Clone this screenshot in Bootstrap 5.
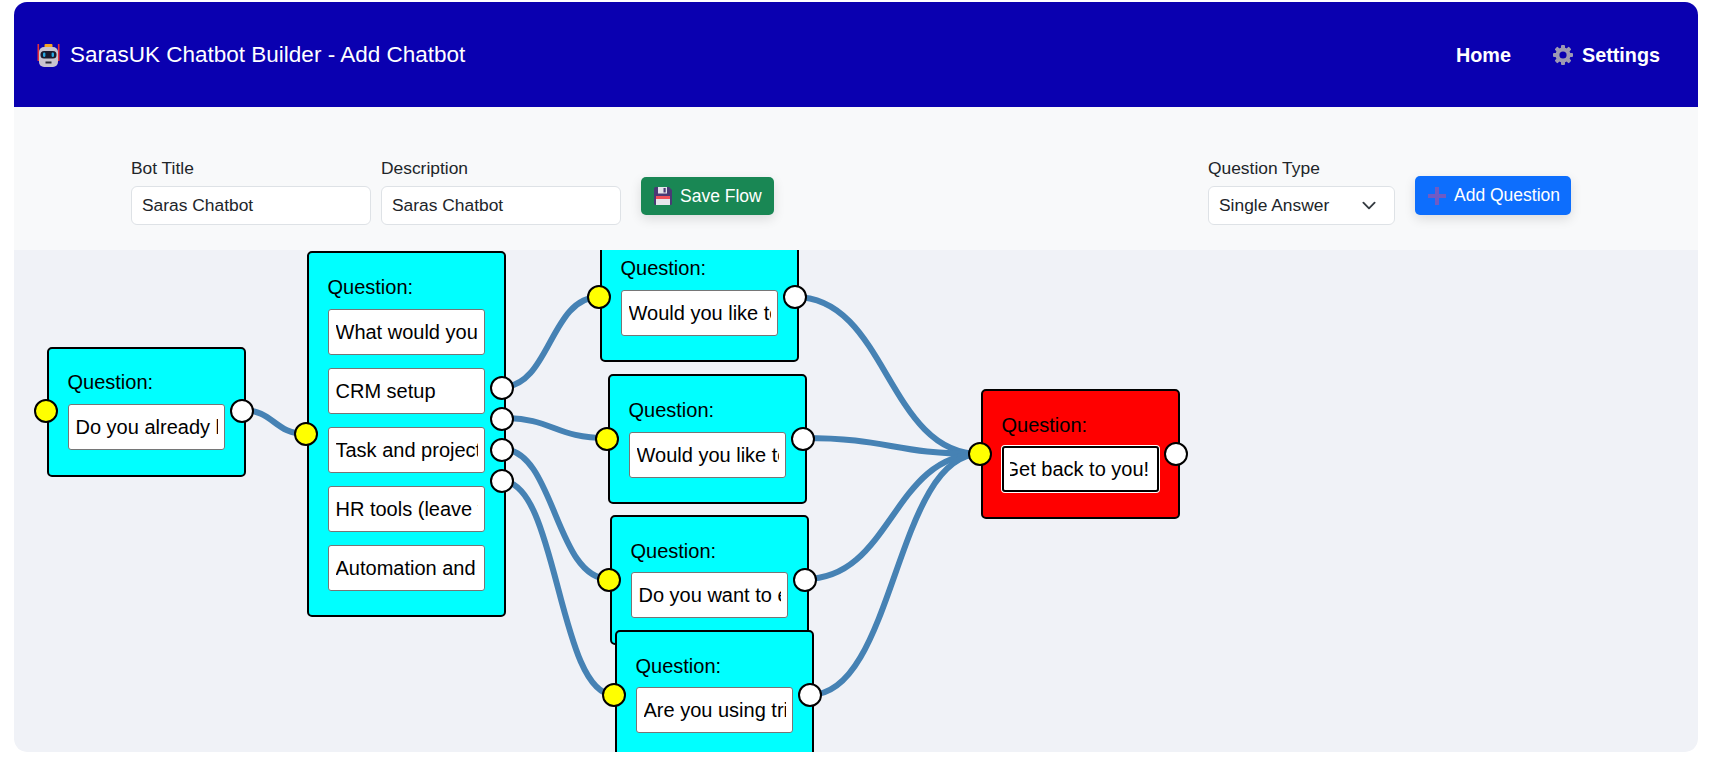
<!DOCTYPE html>
<html lang="en">
<head>
<meta charset="utf-8">
<title>SarasUK Chatbot Builder - Add Chatbot</title>
<link rel="stylesheet" href="https://cdn.jsdelivr.net/npm/bootstrap@5.3.0/dist/css/bootstrap.min.css">
<style>
html,body{height:100%;overflow:hidden}
body{background:#fff;font-family:"Liberation Sans",Arial,sans-serif;color:#212529}
.shell{margin:2px 13px 0 14px;border-radius:13px;overflow:hidden}
.topbar{background:#0a00b0;height:105px;padding:0 38px 0 23px}
.brandline{color:#fff;font-size:22.5px;gap:10px;text-decoration:none}
.menu-row{gap:42px}
.menu-item{color:#fff;font-size:19.8px;font-weight:700;text-decoration:none;gap:9px;line-height:24px}
.toolrow{background:#f8f9fa;height:143px;padding:48px 127px 25px 117px;position:relative;z-index:5}
.left-tools{gap:10px}
.right-tools{gap:20px}
.field-title{font-size:17.4px;line-height:26px;margin-bottom:5px;display:block;color:#212529}
.field-wide{width:240px}
.field-type{width:187px}
.toolrow .form-control,.toolrow .form-select{height:39px;font-size:17.4px;padding:0 10px;line-height:37px;border-radius:6px;border-color:#dee2e6;color:#212529}
.toolrow .form-select{background-position:right 15px center;background-size:20px 15px}
.action{height:38px;margin-bottom:10px;font-size:17.5px;padding:0 13px;border-radius:5px;display:flex;align-items:center;gap:8px;box-shadow:0 4px 12px rgba(0,0,0,.12);border:0;white-space:nowrap}
.action svg{flex:none}
.action-save{width:133px;margin-left:10px;background:#198754;color:#fff}
.action-add{width:156px;height:39px;background:#0d6efd;color:#fff;gap:8px}
.canvas{background:#f0f2f7;height:502px;position:relative;overflow:hidden;border-radius:0 0 13px 13px}
.wires{position:absolute;left:0;top:0;width:1684px;height:502px}
.wires path{fill:none;stroke:#4682b4;stroke-width:6}
.fnode{position:absolute;width:199px;border:2px solid #000;border-radius:5px;background:#0ff;padding:22px 19px 26px 18.5px;color:#000}
.fnode.endnode{background:#f00}
.fnode .qtext{font-size:20px;line-height:24px;margin-bottom:10px;display:block}
.fnode input{display:block;width:157px;height:46px;font-family:"Liberation Sans",Arial,sans-serif;font-size:20px;color:#000;background:#fff;border:1px solid #767676;border-radius:3px;padding:0 6px 0 7px;margin:0;outline:0}
.fnode input+input{margin-top:13px}
.fnode input.focused{border:2px solid #000;box-shadow:0 0 0 1px #fff;text-indent:-6px;padding:0 6px 0 6px}
.ports{position:absolute;top:-2px;bottom:-2px;display:flex;flex-direction:column;justify-content:center;gap:7px}
.ports-in{left:-15px}
.ports-out{right:-10px}
.port{width:24px;height:24px;border:2px solid #000;border-radius:50%;flex:none}
.port-in{background:#ff0}
.port-out{background:#fff}
.lift{margin-top:-3px}
.n1{left:33px;top:97px;height:130px;padding-top:21px}
.n2{left:293px;top:1px;height:366px}
.n3{left:586px;top:-18px;height:130px}
.n4{left:594px;top:124px;height:130px}
.n5{left:596px;top:265px;height:130px}
.n6{left:601px;top:380px;height:130px}
.n7{left:967px;top:139px;height:130px}
.n5 .qtext,.n6 .qtext,.n7 .qtext{margin-bottom:9px}
</style>
</head>
<body>
<div class="shell">
  <nav class="topbar d-flex align-items-center justify-content-between">
    <a class="brandline d-flex align-items-center" href="#">
      <svg width="23" height="24" viewBox="0 0 23 24" aria-hidden="true">
        <rect x="0.5" y="1" width="1.6" height="17" fill="#e5303a"/>
        <rect x="20.9" y="1" width="1.6" height="17" fill="#e5303a"/>
        <rect x="7.5" y="1" width="8" height="4" rx="1" fill="#f5a623"/>
        <rect x="2" y="4" width="19" height="20" rx="5" fill="#c9c4d0"/>
        <rect x="3.5" y="8" width="16" height="7.5" rx="3.5" fill="#1a1a2e"/>
        <rect x="6" y="9.5" width="2.4" height="4.5" rx="1.2" fill="#29a9e0"/>
        <rect x="14.6" y="9.5" width="2.4" height="4.5" rx="1.2" fill="#29a9e0"/>
        <rect x="8.5" y="18.5" width="6" height="2" fill="#2b2b3a"/>
      </svg>
      <span>SarasUK Chatbot Builder - Add Chatbot</span>
    </a>
    <div class="menu-row d-flex align-items-center">
      <a class="menu-item d-flex align-items-center" href="#">Home</a>
      <a class="menu-item d-flex align-items-center" href="#">
        <svg width="20" height="20" viewBox="0 0 20 20" aria-hidden="true">
          <g fill="#9d99b3">
            <rect x="8" y="0" width="4" height="20" rx="1"/>
            <rect x="8" y="0" width="4" height="20" rx="1" transform="rotate(45 10 10)"/>
            <rect x="8" y="0" width="4" height="20" rx="1" transform="rotate(90 10 10)"/>
            <rect x="8" y="0" width="4" height="20" rx="1" transform="rotate(135 10 10)"/>
            <circle cx="10" cy="10" r="7.6"/>
          </g>
          <circle cx="10" cy="10" r="3.6" fill="#0a00b0"/>
        </svg>
        <span>Settings</span>
      </a>
    </div>
  </nav>

  <div class="toolrow d-flex align-items-end justify-content-between">
    <div class="left-tools d-flex align-items-end">
      <div class="field-wide">
        <label class="field-title" for="botTitle">Bot Title</label>
        <input id="botTitle" class="form-control" value="Saras Chatbot">
      </div>
      <div class="field-wide">
        <label class="field-title" for="botDesc">Description</label>
        <input id="botDesc" class="form-control" value="Saras Chatbot">
      </div>
      <button type="button" class="btn action action-save">
        <svg width="18" height="18" viewBox="0 0 18 18" aria-hidden="true">
          <path d="M0 1.5A1.5 1.5 0 0 1 1.5 0H15l3 3v13.5a1.5 1.5 0 0 1-1.5 1.5h-15A1.5 1.5 0 0 1 0 16.5z" fill="#4a3a75"/>
          <rect x="4" y="0" width="9" height="6.5" fill="#e4e4ea"/>
          <rect x="9.5" y="1" width="2.2" height="4.5" fill="#4a3a75"/>
          <rect x="2" y="9" width="14" height="3" fill="#f0505a"/>
          <rect x="2" y="12" width="14" height="6" fill="#e6e6ec"/>
        </svg>
        <span>Save Flow</span>
      </button>
    </div>
    <div class="right-tools d-flex align-items-end">
      <div class="field-type">
        <label class="field-title" for="qType">Question Type</label>
        <select id="qType" class="form-select"><option>Single Answer</option></select>
      </div>
      <button type="button" class="btn action action-add">
        <svg width="18" height="18" viewBox="0 0 18 18" aria-hidden="true">
          <rect x="7" y="0" width="4" height="18" fill="#6f5bc4"/>
          <rect x="0" y="7" width="18" height="4" fill="#6f5bc4"/>
        </svg>
        <span>Add Question</span>
      </button>
    </div>
  </div>

  <div class="canvas">
    <svg class="wires" viewBox="14 250 1684 502" aria-hidden="true">
      <path d="M242 410 C274 410 274 434 306 434"/>
      <path d="M502 387 C550 387 550 297 599 297"/>
      <path d="M502 418 C554 418 554 438 607 438"/>
      <path d="M502 449 C555 449 555 579 609 579"/>
      <path d="M502 481 C558 481 558 695 614 695"/>
      <path d="M795 297 C887 297 887 454 980 454"/>
      <path d="M803 438 C891 438 891 454 980 454"/>
      <path d="M805 579 C892 579 892 454 980 454"/>
      <path d="M810 695 C895 695 895 454 980 454"/>
    </svg>

    <div class="fnode n1">
      <div class="ports ports-in lift"><div class="port port-in"></div></div>
      <span class="qtext">Question:</span>
      <input value="Do you already have a CRM?">
      <div class="ports ports-out lift"><div class="port port-out"></div></div>
    </div>

    <div class="fnode n2">
      <div class="ports ports-in"><div class="port port-in"></div></div>
      <span class="qtext">Question:</span>
      <input value="What would you like to set up?">
      <input value="CRM setup">
      <input value="Task and project management">
      <input value="HR tools (leave tracking)">
      <input value="Automation and workflows">
      <div class="ports ports-out">
        <div class="port port-out"></div>
        <div class="port port-out"></div>
        <div class="port port-out"></div>
        <div class="port port-out"></div>
      </div>
    </div>

    <div class="fnode n3">
      <div class="ports ports-in"><div class="port port-in"></div></div>
      <span class="qtext">Question:</span>
      <input value="Would you like to track leads?">
      <div class="ports ports-out"><div class="port port-out"></div></div>
    </div>

    <div class="fnode n4">
      <div class="ports ports-in"><div class="port port-in"></div></div>
      <span class="qtext">Question:</span>
      <input value="Would you like to assign tasks?">
      <div class="ports ports-out"><div class="port port-out"></div></div>
    </div>

    <div class="fnode n5">
      <div class="ports ports-in"><div class="port port-in"></div></div>
      <span class="qtext">Question:</span>
      <input value="Do you want to enable leave?">
      <div class="ports ports-out"><div class="port port-out"></div></div>
    </div>

    <div class="fnode n6">
      <div class="ports ports-in"><div class="port port-in"></div></div>
      <span class="qtext">Question:</span>
      <input value="Are you using tribal tools?">
      <div class="ports ports-out"><div class="port port-out"></div></div>
    </div>

    <div class="fnode endnode n7">
      <div class="ports ports-in"><div class="port port-in"></div></div>
      <span class="qtext">Question:</span>
      <input class="focused" value="Get back to you!">
      <div class="ports ports-out"><div class="port port-out"></div></div>
    </div>
  </div>
</div>
<script src="https://cdn.jsdelivr.net/npm/bootstrap@5.3.0/dist/js/bootstrap.bundle.min.js"></script>
</body>
</html>
